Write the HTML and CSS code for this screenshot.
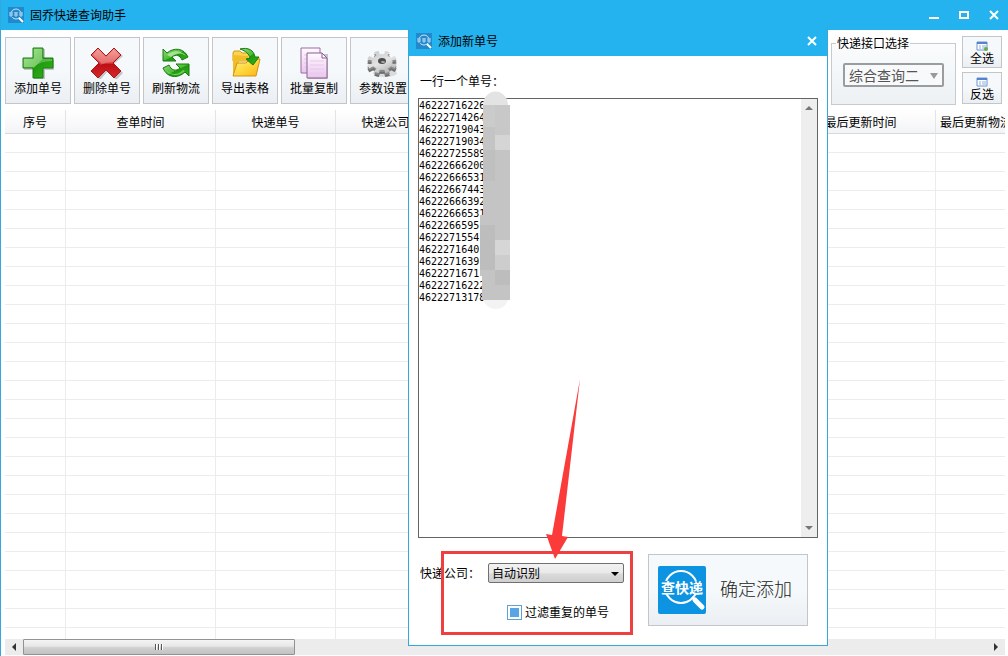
FILE: index.html
```html
<!DOCTYPE html>
<html lang="zh-CN">
<head>
<meta charset="utf-8">
<title>固乔快递查询助手</title>
<link rel="stylesheet" href="styles.css">
</head>
<body>
<svg class="defs" aria-hidden="true">
  <defs>
    <linearGradient id="green" x1="0" y1="0" x2="1" y2="1"><stop offset="0" stop-color="#8fdc7c"/><stop offset=".5" stop-color="#4cbb35"/><stop offset=".52" stop-color="#1f9a10"/><stop offset="1" stop-color="#35b51c"/></linearGradient>
    <linearGradient id="red" x1="0" y1="0" x2="0" y2="1"><stop offset="0" stop-color="#f08078"/><stop offset=".5" stop-color="#dc3d3d"/><stop offset=".55" stop-color="#bd0f16"/><stop offset="1" stop-color="#d8282c"/></linearGradient>
    <linearGradient id="gold" x1="0" y1="0" x2="1" y2="1"><stop offset="0" stop-color="#fff08c"/><stop offset=".5" stop-color="#ffd83c"/><stop offset="1" stop-color="#fbb21c"/></linearGradient>
    <linearGradient id="paper" x1="0" y1="0" x2="0" y2="1"><stop offset="0" stop-color="#fffaff"/><stop offset="1" stop-color="#e9c6ec"/></linearGradient>
    <linearGradient id="steel" gradientUnits="userSpaceOnUse" x1="-14" y1="-14" x2="14" y2="14"><stop offset="0" stop-color="#c4c4c4"/><stop offset=".5" stop-color="#e4e4e4"/><stop offset="1" stop-color="#a8a8a8"/></linearGradient>
    <g id="gear">
      <circle r="10"/>
      <circle r="12" fill="none" stroke-width="6" pathLength="160" stroke-dasharray="9 11"/>
    </g>
    <symbol id="mark" viewBox="0 0 16 16">
      <rect width="16" height="16" fill="#2289cc"/>
      <circle cx="8" cy="7" r="5" fill="none" stroke="#c9e8fa" stroke-width="1"/>
      <path d="M1 5h14v5H1z" fill="#2289cc"/>
      <path d="M1 6h4M1 8h4M3 5v5M6 6h4M6 8h4M8 5v5M11 6h4M11 8h4M13 5v5" stroke="#d8effb" stroke-width="1" opacity=".8"/>
      <path d="M11 11l4 4" stroke="#fff" stroke-width="2"/>
    </symbol>
    <symbol id="cross" viewBox="0 0 12 12"><path d="M2 2l8 8M10 2l-8 8" stroke="#fff" stroke-width="2"/></symbol>
  </defs>
</svg>

<main class="window">
  <header class="titlebar">
    <svg class="mark"><use href="#mark"/></svg>
    <h1 class="title">固乔快递查询助手</h1>
    <div class="window-controls">
      <button class="control" aria-label="最小化"><svg viewBox="0 0 12 12"><path d="M1 9h10" stroke="#fff" stroke-width="2"/></svg></button>
      <button class="control" aria-label="最大化"><svg viewBox="0 0 12 12"><path d="M2 3h8v6H2z" fill="none" stroke="#fff" stroke-width="2"/></svg></button>
      <button class="control" aria-label="关闭"><svg><use href="#cross"/></svg></button>
    </div>
  </header>

  <nav class="toolbar">
    <button class="tool">
      <svg viewBox="0 0 32 32"><path d="M12 2h11v11h10v10H23v9H12v-9H2V13h10z" fill="#777" opacity=".4"/><path d="M11 1h10v10h10v10H21v10H11V21H1V11h10z" fill="url(#green)" stroke="#187a10"/><path d="M12 2h8v10h10v2Q18 14 12 20H2v-8h10z" fill="#fff" opacity=".25"/></svg>
      <span>添加单号</span>
    </button>
    <button class="tool">
      <svg viewBox="0 0 32 32"><path d="M9 3l8 9 8-9 7 6-9 8 9 9-7 7-8-9-8 9-6-7 8-9-8-8z" fill="#777" opacity=".4"/><path d="M7 1l8 8 8-8 7 7-8 8 8 8-7 7-8-8-8 8-7-7 8-8-8-8z" fill="url(#red)" stroke="#a5181b"/><path d="M7 2l8 8 8-8 6 6-7 7Q15 15 9 18l1-2-8-8z" fill="#fff" opacity=".25"/></svg>
      <span>删除单号</span>
    </button>
    <button class="tool">
      <svg viewBox="0 0 32 32"><path d="M3 2l4 4C14 0 24 1 28 10l-6 3c-2-5-6-6-10-3l4 4H3z" fill="url(#green)" stroke="#187a10"/><path d="M7 8C13 3 21 3 26 9c-6-4-10-3-15 1z" fill="#d8f8c8" opacity=".6"/><path d="M29 29l-4-4C18 32 7 31 3 21l6-3c2 5 7 7 11 3l-4-4h13z" fill="url(#green)" stroke="#187a10"/><path d="M5 22c5 6 13 7 18 1l2 1C18 30 9 29 5 22z" fill="#a8ec88" opacity=".6"/></svg>
      <span>刷新物流</span>
    </button>
    <button class="tool">
      <svg viewBox="0 0 32 32"><path d="M4 6l1-2h6l2 2h9v8H4z" fill="#fbd453" stroke="#d09a18"/><path d="M4 8v21h3l3-15h9V9z" fill="#f3bd28"/><path d="M4 29l4-13h9l4-4h10l-4 17z" fill="url(#gold)" stroke="#d2930f"/><path d="M11 2c8-2 14 1 15 8h4l-6 8-7-6 4-1c-1-4-4-7-10-9z" fill="url(#green)" stroke="#187a10"/></svg>
      <span>导出表格</span>
    </button>
    <button class="tool">
      <svg viewBox="0 0 32 32"><path d="M3 1h19v25H3z" fill="url(#paper)" stroke="#9a6ca2"/><path d="M6 8h13M6 12h13M6 16h13M6 20h13" stroke="#e2c6e8"/><path d="M10 7h20v25H10z" fill="#777" opacity=".4"/><path d="M9 6h15l5 5v20H9z" fill="url(#paper)" stroke="#8b5c94"/><path d="M24 6v5h5z" fill="#fff" stroke="#8b5c94"/><path d="M12 14h14M12 18h14M12 22h14M12 26h14" stroke="#e8c8ec"/></svg>
      <span>批量复制</span>
    </button>
    <button class="tool">
      <svg viewBox="0 0 32 32">
        <ellipse cx="18" cy="26" rx="12" ry="4" fill="#888" opacity=".25"/>
        <g transform="translate(15 19) scale(1 .75) rotate(12)" fill="#6e6e6e" stroke="#6e6e6e"><use href="#gear"/></g>
        <g transform="translate(15 17) scale(1 .75) rotate(12)" fill="#8a8a8a" stroke="#8a8a8a"><use href="#gear"/></g>
        <g transform="translate(15 15) scale(1 .75) rotate(12)" fill="url(#steel)" stroke="url(#steel)"><use href="#gear"/></g>
        <ellipse cx="15" cy="14" rx="4" ry="3" fill="#4c4c4c"/><ellipse cx="16" cy="15" rx="2" ry="1" fill="#aaa"/>
      </svg>
      <span>参数设置</span>
    </button>
    <fieldset class="api">
      <legend><label for="api">快递接口选择</label></legend>
      <div class="api-box">
        <select id="api" class="api-select"><option>综合查询二</option></select>
        <svg class="api-arrow" viewBox="0 0 8 6"><path d="M0 0h8L4 6z" fill="#999"/></svg>
      </div>
    </fieldset>
    <div class="picks">
      <button class="pick">
        <svg viewBox="0 0 12 10"><path d="M1 1h10v8H1z" fill="#fff" stroke="#6f95d0"/><path d="M1 2h10" stroke="#5583d0" stroke-width="2"/><path d="M3 5h2M6 5h4M3 7h2M6 7h3" stroke="#8eafe0"/><circle cx="10" cy="8" r="2" fill="#6cac48"/></svg>
        <span>全选</span>
      </button>
      <button class="pick">
        <svg viewBox="0 0 12 10"><path d="M1 1h10v8H1z" fill="#fff" stroke="#6f95d0"/><path d="M1 2h10" stroke="#5583d0" stroke-width="2"/><path d="M3 5h2M6 5h4M3 7h2M6 7h4" stroke="#8eafe0"/></svg>
        <span>反选</span>
      </button>
    </div>
  </nav>

  <section class="list">
    <table class="grid">
      <colgroup><col class="c-index"><col class="c-time"><col class="c-number"><col class="c-company"><col class="c-info"><col class="c-time"><col></colgroup>
      <thead><tr><th>序号</th><th>查单时间</th><th>快递单号</th><th>快递公司</th><th></th><th>最后更新时间</th><th class="last">最后更新物流</th></tr></thead>
      <tbody id="rows"></tbody>
    </table>
  </section>

  <div class="hscroll">
    <button class="hscroll-arrow" aria-label="向左"><svg viewBox="0 0 4 8"><path d="M4 0v8L0 4z" fill="#333"/></svg></button>
    <div class="thumb"><i></i><i></i><i></i></div>
    <button class="hscroll-arrow" aria-label="向右"><svg viewBox="0 0 4 8"><path d="M0 0v8l4-4z" fill="#333"/></svg></button>
  </div>

  <section class="dialog" role="dialog" aria-labelledby="dialog-title">
    <header class="dialog-title">
      <svg class="mark"><use href="#mark"/></svg>
      <h2 class="title" id="dialog-title">添加新单号</h2>
      <button class="control" aria-label="关闭"><svg><use href="#cross"/></svg></button>
    </header>
    <div class="dialog-body">
      <label class="numbers-label" for="numbers">一行一个单号：</label>
      <div class="numbers-box">
        <textarea id="numbers" class="numbers">46222716226
46222714264
46222719043
46222719034
46222725589
46222666200
46222666531
46222667443
46222666392
46222666531
4622266595
4622271554
4622271640
4622271639
4622271671
46222716222
46222713178</textarea>
        <div class="vscroll">
          <svg viewBox="0 0 8 4"><path d="M0 4h8L4 0z" fill="#777"/></svg>
          <svg viewBox="0 0 8 4"><path d="M0 0h8L4 4z" fill="#777"/></svg>
        </div>
      </div>
      <div class="dialog-foot">
        <div class="options">
          <div class="company">
            <label for="company">快递公司：</label>
            <div class="company-box">
              <select id="company" class="company-select"><option>自动识别</option></select>
              <svg class="company-arrow" viewBox="0 0 8 4"><path d="M0 0h8L4 4z" fill="#000"/></svg>
            </div>
          </div>
          <label class="filter"><input type="checkbox" class="check" checked>过滤重复的单号</label>
        </div>
        <button class="confirm">
          <svg viewBox="0 0 48 48"><rect width="48" height="48" rx="2" fill="#0c93e2"/><circle cx="23" cy="21" r="16" fill="none" stroke="#fff" stroke-width="2"/><path d="M1 15h46v13H1z" fill="#0c93e2"/><text x="3" y="27" class="logo-text">查快递</text><path d="M34 31l4 4" stroke="#fff" stroke-width="2"/><path d="M37 34l7 7" stroke="#fff" stroke-width="5" stroke-linecap="round"/></svg>
          <span>确定添加</span>
        </button>
      </div>
    </div>
    <svg class="mosaic" viewBox="0 0 34 218">
      <path d="M6 14C7-4 30-4 31 14z" fill="#e3e3e3"/>
      <path d="M6 14h27v195H5V185H3V124h3z" fill="#c4c4c4"/>
      <path d="M6 14h12v22H6z" fill="#cbcbcb"/>
      <path d="M18 14h15v30H18z" fill="#c8c8c8"/>
      <path d="M18 44h15v15H18z" fill="#d5d5d5"/>
      <path d="M6 59h12v31H6z" fill="#bfbfbf"/>
      <path d="M18 149h15v15H18z" fill="#d6d6d6"/>
      <path d="M18 164h15v15H18z" fill="#cdcdcd"/>
      <path d="M3 134h15v45H3zM18 179h15v15H18z" fill="#bdbdbd"/>
      <path d="M6 209h25c-4 12-20 12-25 0z" fill="#f3f3f3"/>
    </svg>
    <div class="highlight"></div>
    <svg class="pointer" viewBox="0 0 36 182"><path d="M35 0L17 157l6 1-13 22L1 155l6 1z" fill="#fb3a3a"/></svg>
  </section>
</main>
<script src="rows.js"></script>
</body>
</html>
```
FILE: styles.css
```css
* { box-sizing: border-box; }
body {
  margin: 0;
  font: 12px/16px "Noto Sans CJK SC", sans-serif;
  color: #000;
}
button, select, textarea { font: inherit; color: inherit; margin: 0; }
button { border: 0; padding: 0; background: none; }
svg { display: block; }
.defs { position: absolute; width: 0; height: 0; }

.window {
  position: relative;
  display: flex;
  flex-direction: column;
  height: 100vh;
  overflow: hidden;
  border-left: 1px solid #35a7db;
  background: #fff;
}
.titlebar {
  display: flex;
  align-items: center;
  flex: none;
  height: 30px;
  padding: 0 8px 0 7px;
  background: #24b3ef;
}
.mark { width: 16px; height: 16px; }
.title { flex: 1; margin: 0 0 0 6px; font-size: 12px; font-weight: 400; }
.window-controls { display: flex; gap: 18px; }
.control, .control svg { display: block; width: 12px; height: 12px; }

.toolbar {
  display: flex;
  flex: none;
  gap: 3px;
  padding: 6px 6px 0 4px;
  height: 80px;
}
.tool, .pick, .confirm {
  border: 1px solid #c2c6ca;
  background: linear-gradient(#f5f9fc, #f6f9fb 50%, #ebeff3);
}
.tool {
  display: flex;
  flex-direction: column;
  align-items: center;
  flex: none;
  gap: 1px;
  width: 66px;
  height: 67px;
  margin-top: 1px;
  padding-top: 9px;
}
.tool svg { width: 32px; height: 32px; }
.api {
  flex: none;
  width: 125px;
  height: 69px;
  margin: 0 3px 0 auto;
  padding: 13px 11px 0;
  border: 1px solid #c6cbcf;
  background: linear-gradient(#fafcfd, #edf1f4);
}
.api legend { margin-left: -7px; padding: 0 1px; line-height: 14px; }
.api-box, .company-box { position: relative; }
.api-select {
  display: block;
  appearance: none;
  width: 100%;
  height: 24px;
  padding: 0 4px;
  border: 2px solid #9a9da0;
  border-radius: 2px;
  background: #f7f9fa;
  color: #555;
  font-size: 14px;
}
.api-arrow { position: absolute; right: 6px; top: 10px; width: 8px; height: 6px; }
.picks { display: flex; flex-direction: column; gap: 4px; }
.pick {
  display: flex;
  flex-direction: column;
  align-items: center;
  width: 40px;
  height: 32px;
  padding-top: 4px;
  line-height: 14px;
}
.pick svg { width: 12px; height: 10px; }

.list { flex: 1; min-height: 0; overflow: hidden; margin: 0 3px 0 4px; }
.grid { width: 100%; table-layout: fixed; border-collapse: separate; border-spacing: 0; }
.c-index { width: 61px; }
.c-time { width: 150px; }
.c-number { width: 120px; }
.c-company { width: 100px; }
.c-info { width: 350px; }
.grid th {
  height: 24px;
  padding: 0;
  border-right: 1px solid #e2e5e8;
  border-bottom: 1px solid #d6d8da;
  background: linear-gradient(#fff, #f3f4f6);
  font-weight: 400;
  white-space: nowrap;
  overflow: hidden;
}
.grid th.last { padding-left: 4px; text-align: left; border-right: 0; }
.grid td {
  height: 19px;
  padding: 0;
  border-right: 1px solid #ececec;
  border-bottom: 1px solid #ececec;
}
.grid td:last-child { border-right: 0; }

.hscroll {
  display: flex;
  flex: none;
  height: 16px;
  margin: 0 3px 1px 4px;
  background: #ececec;
}
.hscroll-arrow { display: grid; place-items: center; width: 18px; }
.hscroll-arrow:last-child { margin-left: auto; }
.hscroll-arrow svg { width: 4px; height: 8px; }
.thumb {
  display: flex;
  align-items: center;
  justify-content: center;
  gap: 1px;
  width: 272px;
  border: 1px solid #929292;
  border-radius: 1px;
  background: linear-gradient(#f5f5f5, #e6e6e6 45%, #d0d0d0 55%, #c2c2c2);
}
.thumb i { width: 2px; height: 6px; border-right: 1px solid #fff; background: #555; }

.dialog {
  position: absolute;
  left: 407px;
  top: 26px;
  width: 420px;
  border: 1px solid #35a7db;
  border-top-color: #24b3ef;
  background: #fff;
}
.dialog-title {
  display: flex;
  align-items: center;
  height: 29px;
  padding: 0 9px 2px 7px;
  background: #24b3ef;
}
.dialog-body { display: flex; flex-direction: column; padding: 17px 9px 19px; }
.numbers-label { padding-left: 2px; }
.numbers-box {
  display: flex;
  height: 440px;
  margin-top: 9px;
  border: 1px solid #646464;
}
.numbers {
  flex: 1;
  min-width: 0;
  padding: 1px 0 0;
  border: 0;
  outline: 0;
  resize: none;
  overflow: hidden;
  background: #fff;
  font: 10px/12px "DejaVu Sans Mono", monospace;
}
.vscroll {
  display: flex;
  flex-direction: column;
  align-items: center;
  justify-content: space-between;
  width: 16px;
  padding: 7px 0;
  background: #eee;
}
.vscroll svg { width: 8px; height: 4px; }
.dialog-foot {
  display: flex;
  justify-content: space-between;
  margin-top: 16px;
  padding-right: 10px;
}
.options { padding: 9px 0 0 2px; }
.company { display: flex; align-items: center; gap: 8px; }
.company-select {
  display: block;
  appearance: none;
  width: 136px;
  height: 20px;
  padding: 0 3px;
  border: 1px solid #707070;
  border-radius: 2px;
  background: linear-gradient(#f2f2f2, #e9e9e9 50%, #dadada 55%, #cfcfcf);
}
.company-arrow { position: absolute; right: 5px; top: 9px; width: 8px; height: 4px; }
.filter { display: flex; align-items: center; gap: 3px; margin: 21px 0 0 87px; }
.check {
  appearance: none;
  width: 15px;
  height: 15px;
  margin: 0;
  border: 1px solid #5ba3da;
  background: #fff;
}
.check:checked { background: #5ba5e2; box-shadow: inset 0 0 0 2px #fff; }
.confirm {
  display: flex;
  align-items: center;
  gap: 14px;
  width: 160px;
  height: 72px;
  padding-left: 9px;
  font-size: 18px;
  font-weight: 300;
  line-height: 24px;
  color: #222;
}
.confirm svg { width: 48px; height: 48px; }
.confirm span { padding-bottom: 4px; }
.logo-text { font-size: 14px; font-weight: 700; fill: #fff; }

.mosaic { position: absolute; left: 68px; top: 64px; width: 34px; height: 218px; }
.highlight {
  position: absolute;
  left: 32px;
  top: 524px;
  width: 192px;
  height: 84px;
  border: 3px solid #ee4040;
}
.pointer { position: absolute; left: 136px; top: 352px; width: 36px; height: 182px; }
```
FILE: rows.js
```js
const body = document.getElementById('rows');
for (let r = 0; r < 60; r++) {
  const row = body.insertRow();
  for (let c = 0; c < 7; c++) row.insertCell();
}
```
